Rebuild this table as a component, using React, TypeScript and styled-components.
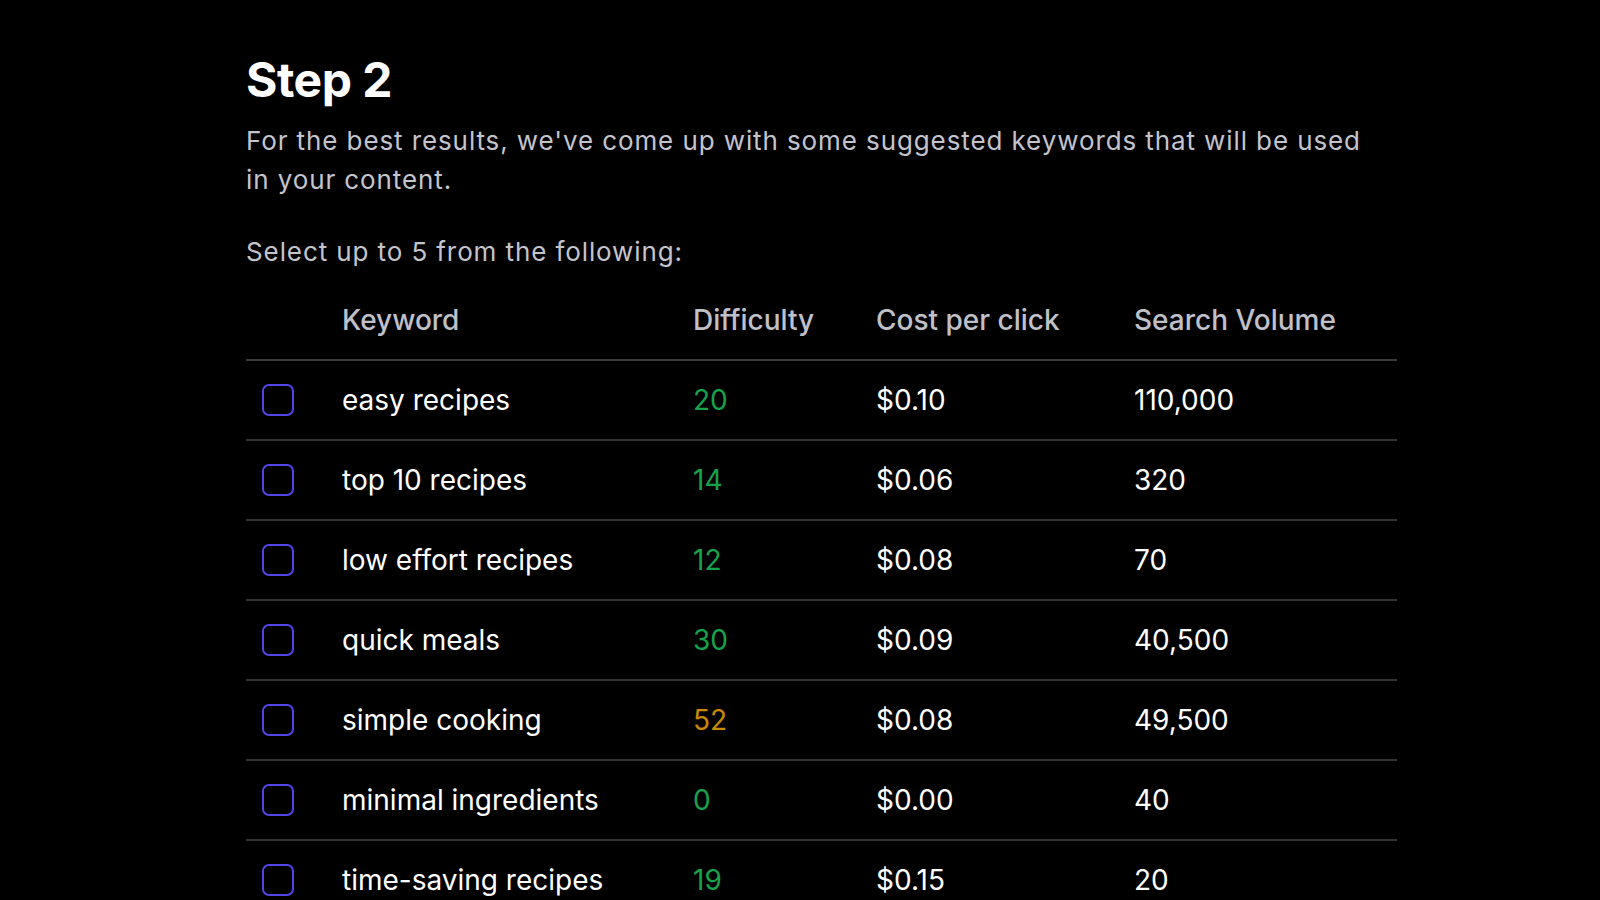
import React from "react";
import styled, { createGlobalStyle } from "styled-components";

const Global = createGlobalStyle`
  html, body { margin: 0; padding: 0; background: #000; }
  body { font-family: Inter, "Noto Sans", sans-serif; color: #fff; }
`;

const Page = styled.main`
  width: 1151px;
  margin-left: 246px;
  padding-top: 50px;
`;

const Title = styled.h1`
  margin: 0;
  font-size: 48px;
  line-height: 60px;
  font-weight: 700;
  letter-spacing: -0.5px;
  color: #fff;
`;

const Lead = styled.p`
  margin: 11px 0 0;
  font-size: 26px;
  line-height: 39px;
  letter-spacing: 0.9px;
  color: #c4c4cc;
  max-width: 1125px;
`;

const Prompt = styled.p`
  margin: 33px 0 0;
  font-size: 26px;
  line-height: 39px;
  letter-spacing: 0.9px;
  color: #c4c4cc;
`;

const Table = styled.div`
  margin-top: 10px;
  display: grid;
  grid-template-columns: 96px 351px 183px 258px 1fr;
`;

const Row = styled.div<{ $header?: boolean }>`
  display: contents;
  & > * {
    height: 80px;
    border-bottom: 2px solid ${(p) => (p.$header ? "#3a3a3e" : "#333336")};
    box-sizing: border-box;
    color: ${(p) => (p.$header ? "#c0c0c8" : "#fff")};
    font-weight: ${(p) => (p.$header ? 500 : 400)};
  }
`;

const Cell = styled.div<{ $color?: string }>`
  display: flex;
  align-items: center;
  font-size: 28px;
  ${(p) => (p.$color ? `color: ${p.$color} !important;` : "")}
`;

const CheckCell = styled.div`
  display: flex;
  align-items: center;
  padding-left: 16px;
`;

const Box = styled.span`
  width: 32px;
  height: 32px;
  box-sizing: border-box;
  border: 2px solid #4f46e5;
  border-radius: 7px;
`;

const rows = [
  { k: "easy recipes", d: 20, c: "$0.10", v: "110,000" },
  { k: "top 10 recipes", d: 14, c: "$0.06", v: "320" },
  { k: "low effort recipes", d: 12, c: "$0.08", v: "70" },
  { k: "quick meals", d: 30, c: "$0.09", v: "40,500" },
  { k: "simple cooking", d: 52, c: "$0.08", v: "49,500" },
  { k: "minimal ingredients", d: 0, c: "$0.00", v: "40" },
  { k: "time-saving recipes", d: 19, c: "$0.15", v: "20" },
];

const diffColor = (d: number) => (d >= 50 ? "#ca8a04" : "#16a34a");

export default function App() {
  return (
    <>
      <Global />
      <Page>
        <Title>Step 2</Title>
        <Lead>
          For the best results, we've come up with some suggested keywords that will be used in your content.
        </Lead>
        <Prompt>Select up to 5 from the following:</Prompt>
        <Table>
          <Row $header>
            <Cell />
            <Cell>Keyword</Cell>
            <Cell>Difficulty</Cell>
            <Cell>Cost per click</Cell>
            <Cell>Search Volume</Cell>
          </Row>
          {rows.map((r) => (
            <Row key={r.k}>
              <CheckCell>
                <Box />
              </CheckCell>
              <Cell>{r.k}</Cell>
              <Cell $color={diffColor(r.d)}>{r.d}</Cell>
              <Cell>{r.c}</Cell>
              <Cell>{r.v}</Cell>
            </Row>
          ))}
        </Table>
      </Page>
    </>
  );
}
